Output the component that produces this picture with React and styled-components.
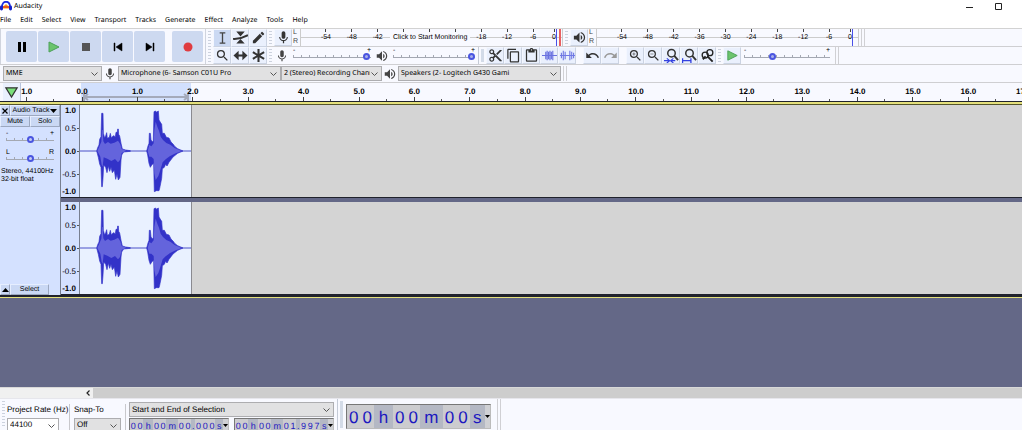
import styled, { createGlobalStyle } from 'styled-components';
import {
  MdContentCopy,
  MdContentCut,
  MdContentPaste,
  MdEdit,
  MdMic,
  MdRedo,
  MdSearch,
  MdUndo,
  MdVolumeUp,
  MdZoomIn,
  MdZoomOut,
} from 'react-icons/md';

const menus = [
  'File',
  'Edit',
  'Select',
  'View',
  'Transport',
  'Tracks',
  'Generate',
  'Effect',
  'Analyze',
  'Tools',
  'Help',
];
const seconds = Array.from({ length: 19 }, (_, i) => Math.abs(i - 1).toFixed(1));
const outline =
  'M291 213 294 203 298 195 300 178 304 170 306 100 310 100 311 160 315 174 318 168 321 158 323 175 329 172 332 160 335 174 341 167 347 170 349 157 353 157 354 147 356 147 357 163 360 168 364 190 368 207 378 210 392 212V214L372 216 366 225 364 240 361 292 356 300 352 282 348 298 344 270 338 278 334 262 330 274 326 258 322 278 318 262 312 255 310 295 308 320 306 320 304 262 300 252 296 232ZM441 213 445 198 448 190 449 160 452 160 454 180 458 185 461 183 463 95 468 93 470 97 476 93 478 120 484 130 486 132 488 160 494 160 500 172 508 174 514 186 520 192 526 200 534 206 550 213 534 220 520 231 508 247 502 258 498 252 494 262 488 266 486 295 480 325 478 332 470 332 464 335 462 250 456 255 452 262 448 250 444 225Z';
const rms =
  'M293 213 300 197 305 185 307 150 309 150 311 184 316 192 325 186 333 191 344 188 355 182 362 193 366 207 380 212 366 219 361 240 355 247 346 237 335 243 323 236 312 232 309 260 306 255 302 230ZM444 213 449 195 455 199 462 190 464 150 468 125 473 140 478 152 483 170 490 180 500 189 512 194 525 204 546 213 525 221 510 229 498 238 489 247 482 270 476 288 468 300 464 280 462 237 455 230 449 230Z';

const Icon = ({ name }) => {
  switch (name) {
    case 'pause':
      return (
        <svg viewBox='0 0 16 16'>
          <path d='M4 3h3v10H4zM9 3h3v10H9z' fill='#000' />
        </svg>
      );
    case 'play':
      return (
        <svg viewBox='0 0 16 16'>
          <path d='M3 3 13 8 3 13Z' fill='#6bc46d' stroke='#4da05a' />
        </svg>
      );
    case 'stop':
      return (
        <svg viewBox='0 0 16 16'>
          <path d='M4 4h8v8H4z' fill='#555' />
        </svg>
      );
    case 'start':
      return (
        <svg viewBox='0 0 16 16'>
          <path d='M4 4h1v8H4zM12 4v8L6 8z' fill='#000' stroke='#000' strokeWidth='.5' />
        </svg>
      );
    case 'end':
      return (
        <svg viewBox='0 0 16 16'>
          <path d='M11 4h1v8h-1zM4 4v8l6-4z' fill='#000' stroke='#000' strokeWidth='.5' />
        </svg>
      );
    case 'record':
      return (
        <svg viewBox='0 0 16 16'>
          <circle cx='8' cy='8' r='4.500' fill='#e03c40' />
        </svg>
      );
    case 'select':
      return (
        <svg viewBox='0 0 16 16'>
          <path d='M5 3h6M8 3v11M5 14h6' fill='none' stroke='#444' strokeWidth='1.400' />
        </svg>
      );
    case 'envelope':
      return (
        <svg viewBox='0 0 16 16'>
          <path d='M0 9.500Q8 10 16 5.500' fill='none' stroke='#333' strokeWidth='2' />
          <path d='M3.500 1.500h9L8 7ZM3.500 14.500h9L8 9.500Z' fill='#333' />
        </svg>
      );
    case 'timeshift':
      return (
        <svg viewBox='0 0 16 16'>
          <path d='M3 8h10' stroke='#333' strokeWidth='2.200' />
          <path d='M6 3 .5 8 6 13zM10 3l5.500 5-5.500 5z' fill='#333' />
        </svg>
      );
    case 'multi':
      return (
        <svg viewBox='0 0 16 16'>
          <path
            d='M8 1v14M2 4.500l12 7M14 4.500l-12 7'
            stroke='#333'
            strokeWidth='2.200'
          />
        </svg>
      );
    case 'trim':
      return (
        <svg viewBox='0 0 16 16'>
          <path
            d='M0 8h16M4 4v8M5.500 3v10M7 4v8M8.500 3v10M10 4v8M11.500 3v10'
            stroke='#6a72e0'
            strokeWidth='1.200'
          />
        </svg>
      );
    case 'silence':
      return (
        <svg viewBox='0 0 16 16'>
          <path
            d='M0 8h16M1.500 5v6M3.500 3v10M5.500 4v8M10.500 3v10M12.500 4v8M14.500 5v6'
            stroke='#7078e4'
            strokeWidth='1.200'
          />
        </svg>
      );
    case 'fitSelection':
    case 'fitProject':
      return (
        <svg viewBox='0 0 16 16'>
          <circle cx='8' cy='5.500' r='4' fill='none' stroke='#333' strokeWidth='1.600' />
          <path d='m11 8.500 4 4.500' stroke='#333' strokeWidth='2' />
          {name === 'fitSelection' ? (
            <path
              d='M0 13.500h5M3 11l3 2.500L3 16M12 13.500H7M10 11l-3 2.500 3 2.500'
              fill='none'
              stroke='#3340e0'
              strokeWidth='1.200'
            />
          ) : (
            <path
              d='M0 13.500h10M.6 11v5M9.500 11v5'
              fill='none'
              stroke='#3340e0'
              strokeWidth='1.400'
            />
          )}
        </svg>
      );
    case 'zoomToggle':
      return (
        <svg viewBox='0 0 16 16'>
          <path d='m8 9 5.500 5.500M3 12l3-3' stroke='#222' strokeWidth='2' />
          <circle cx='5.500' cy='7.500' r='3.200' fill='none' stroke='#222' strokeWidth='1.400' />
          <circle cx='10.500' cy='5' r='3.200' fill='none' stroke='#222' strokeWidth='1.400' />
        </svg>
      );
    case 'triangle':
      return (
        <svg viewBox='0 0 16 16'>
          <path d='M2 3h12L8 13Z' fill='#7be07b' stroke='#333' strokeWidth='1.300' />
        </svg>
      );
    default:
      return null;
  }
};

const Logo = () => (
  <svg width='12' height='10' viewBox='0 0 12 10'>
    <path d='M2 6C2-1 10-1 10 6' fill='none' stroke='#1a2be0' strokeWidth='1.800' />
    <path d='M3 5.500 5 4l1-1 1 1 2 1.500v2H3z' fill='#f59a1c' />
    <path d='M3 6h6' stroke='#e03020' strokeWidth='1.200' />
    <rect x='0' y='4.500' width='3' height='5' rx='1.400' fill='#1422cc' />
    <rect x='9' y='4.500' width='3' height='5' rx='1.400' fill='#1422cc' />
  </svg>
);

const Select = ({ label, value, ...rest }) => (
  <SelectBox {...rest}>
    <select aria-label={label}>
      <option>{value}</option>
    </select>
    <svg width='7' height='4' viewBox='0 0 7 4'>
      <path d='M.5.500 3.500 3.500 6.500.500' fill='none' stroke='#555' />
    </svg>
  </SelectBox>
);

const Slider = ({ label, value, marks = ['-', '+'], width, small }) => (
  <SliderBox $width={width} $small={small}>
    <span>{marks[0]}</span>
    <span>{marks[1]}</span>
    <input type='range' aria-label={label} defaultValue={value} />
  </SliderBox>
);

const Meter = ({ text, red }) => (
  <MeterBox>
    <Channels>
      <span>L</span>
      <span>R</span>
    </Channels>
    <Scale>
      {[54, 48, 42, 36, 30, 24, 18, 12, 6, 0].map((db) => (
        <span key={db}>{text && db > 18 && db < 42 ? '' : db ? `-${db}` : '0'}</span>
      ))}
      {text && <Hint>{text}</Hint>}
      <Peak $red={red} />
    </Scale>
  </MeterBox>
);

const TimeField = ({ value, big }) => (
  <Time $big={big}>
    {value.split('').map((char, i) => (
      <Digit key={i} $char={char}>
        {char}
      </Digit>
    ))}
    <button type='button' aria-label='Time format'>
      <svg width='5' height='3' viewBox='0 0 5 3'>
        <path d='M0 0h5L2.500 3z' />
      </svg>
    </button>
  </Time>
);

const Wave = () => (
  <Channel>
    <Levels>
      <b>1.0</b>
      <span>0.5</span>
      <b>0.0</b>
      <span>-0.5</span>
      <b>-1.0</b>
    </Levels>
    <Clip>
      <svg viewBox='241 75 333 276' preserveAspectRatio='none'>
        <path d='M241 213H574' stroke='#4a50c8' strokeWidth='3' />
        <path d={outline} fill='#3232c8' stroke='#3232c8' strokeWidth='2' />
        <path d={rms} fill='#6464dc' />
      </svg>
    </Clip>
  </Channel>
);

const App = () => {
  return (
    <Window>
      <GlobalStyle />
      <TitleBar>
        <Logo />
        <h1>Audacity</h1>
        <WindowButton type='button' aria-label='Minimize'>
          <svg width='7' height='7' viewBox='0 0 7 7'>
            <path d='M0 4.500h7' stroke='#222' />
          </svg>
        </WindowButton>
        <WindowButton type='button' aria-label='Maximize'>
          <svg width='7' height='7' viewBox='0 0 7 7'>
            <path d='M.5.500h6v6h-6z' fill='none' stroke='#222' />
          </svg>
        </WindowButton>
      </TitleBar>
      <MenuBar>
        {menus.map((menu) => (
          <button type='button' key={menu}>
            {menu}
          </button>
        ))}
      </MenuBar>

      <Toolbars>
        <Transport>
          {['pause', 'play', 'stop', 'start', 'end', 'record'].map((name) => (
            <TransportButton type='button' key={name} aria-label={name}>
              <Icon name={name} />
            </TransportButton>
          ))}
        </Transport>
        <Grip />
        <Tools>
          {['select', 'envelope'].map((name, i) => (
            <ToolButton type='button' key={name} aria-label={name} $active={i === 0}>
              <Icon name={name} />
            </ToolButton>
          ))}
          <ToolButton type='button' aria-label='draw'>
            <MdEdit />
          </ToolButton>
          <ToolButton type='button' aria-label='zoom'>
            <MdSearch />
          </ToolButton>
          {['timeshift', 'multi'].map((name) => (
            <ToolButton type='button' key={name} aria-label={name}>
              <Icon name={name} />
            </ToolButton>
          ))}
        </Tools>
        <Rows>
          <Row>
            <Grip />
            <ToolButton type='button' aria-label='Recording meter'>
              <MdMic />
            </ToolButton>
            <Meter text='Click to Start Monitoring' red />
            <Grip />
            <ToolButton type='button' aria-label='Playback meter'>
              <MdVolumeUp />
            </ToolButton>
            <Meter />
            <End />
          </Row>
          <Row>
            <Grip />
            <Glyph>
              <MdMic />
            </Glyph>
            <Slider label='Recording volume' value={98} width={84} />
            <Glyph>
              <MdVolumeUp />
            </Glyph>
            <Slider label='Playback volume' value={100} width={88} />
            <Grip $edge />
            <ToolButton type='button' aria-label='Cut'>
              <MdContentCut />
            </ToolButton>
            <ToolButton type='button' aria-label='Copy'>
              <MdContentCopy />
            </ToolButton>
            <ToolButton type='button' aria-label='Paste'>
              <MdContentPaste />
            </ToolButton>
            <ToolButton type='button' aria-label='Trim'>
              <Icon name='trim' />
            </ToolButton>
            <ToolButton type='button' aria-label='Silence'>
              <Icon name='silence' />
            </ToolButton>
            <Spacer />
            <ToolButton type='button' aria-label='Undo'>
              <MdUndo />
            </ToolButton>
            <ToolButton type='button' aria-label='Redo' $dim>
              <MdRedo />
            </ToolButton>
            <Spacer />
            <ToolButton type='button' aria-label='Zoom in'>
              <MdZoomIn />
            </ToolButton>
            <ToolButton type='button' aria-label='Zoom out'>
              <MdZoomOut />
            </ToolButton>
            {['fitSelection', 'fitProject', 'zoomToggle'].map((name) => (
              <ToolButton type='button' key={name} aria-label={name}>
                <Icon name={name} />
              </ToolButton>
            ))}
            <Grip />
            <ToolButton type='button' aria-label='Play at speed'>
              <Icon name='play' />
            </ToolButton>
            <Slider label='Playback speed' value={32} width={92} />
            <End />
          </Row>
        </Rows>
      </Toolbars>

      <DeviceBar>
        <Select label='Audio host' value='MME' $width={99} />
        <Glyph>
          <MdMic />
        </Glyph>
        <Select label='Recording device' value='Microphone (6- Samson C01U Pro' $width={163} />
        <Select label='Recording channels' value='2 (Stereo) Recording Channels' $width={101} />
        <Glyph>
          <MdVolumeUp />
        </Glyph>
        <Select label='Playback device' value='Speakers (2- Logitech G430 Gami' $width={163} />
        <End />
      </DeviceBar>

      <Ruler>
        <PinButton type='button' aria-label='Pin play head'>
          <Icon name='triangle' />
        </PinButton>
        <Timeline>
          <Region>
            <svg width='106' height='8' viewBox='0 0 106 8'>
              <path
                d='M1 4h104M1 0v8M105 0v8M5 1 1 4l4 3M101 1l4 3-4 3'
                fill='none'
                stroke='#a4aabb'
                strokeWidth='2'
              />
            </svg>
          </Region>
          <Ticks>
            {seconds.map((label, i) => (
              <span key={i}>{label}</span>
            ))}
          </Ticks>
        </Timeline>
      </Ruler>

      <Track>
        <Panel>
          <PanelRow>
            <PanelButton type='button' aria-label='Close track' $width={10}>
              <svg width='6' height='6' viewBox='0 0 6 6'>
                <path d='m.5.500 5 5m0-5-5 5' stroke='#000' strokeWidth='1.200' />
              </svg>
            </PanelButton>
            <PanelButton type='button'>
              Audio Track
              <svg width='7' height='4' viewBox='0 0 7 4'>
                <path d='M0 0h7L3.500 4z' />
              </svg>
            </PanelButton>
          </PanelRow>
          <PanelRow>
            <PanelButton type='button'>Mute</PanelButton>
            <PanelButton type='button'>Solo</PanelButton>
          </PanelRow>
          <PanelSliders>
            <Slider label='Gain' value={50} small />
            <Slider label='Pan' value={50} marks={['L', 'R']} small />
          </PanelSliders>
          <p>
            Stereo, 44100Hz
            <br />
            32-bit float
          </p>
          <PanelFooter>
            <PanelButton type='button' aria-label='Collapse' $width={10}>
              <svg width='7' height='4' viewBox='0 0 7 4'>
                <path d='M0 4h7L3.500 0z' />
              </svg>
            </PanelButton>
            <PanelButton type='button'>Select</PanelButton>
          </PanelFooter>
        </Panel>
        <ChannelList>
          <Wave />
          <Wave />
        </ChannelList>
      </Track>
      <Canvas />

      <ScrollBar>
        <button type='button' aria-label='Scroll left'>
          <svg width='4' height='6' viewBox='0 0 4 6'>
            <path d='M3.500.500 1 3l2.500 2.500' fill='none' stroke='#222' strokeWidth='1.200' />
          </svg>
        </button>
        <div />
      </ScrollBar>

      <SelectionBar>
        <Grip />
        <Field $width={63}>
          <span>Project Rate (Hz)</span>
          <Select label='Project rate' value='44100' $light $width={52} />
        </Field>
        <Field $width={56}>
          <span>Snap-To</span>
          <Select label='Snap to' value='Off' $width={47} />
        </Field>
        <SelectionRange>
          <Select label='Selection mode' value='Start and End of Selection' />
          <TimeRow>
            <TimeField value='00h00m00.000s' />
            <TimeField value='00h00m01.997s' />
          </TimeRow>
        </SelectionRange>
        <Grip $edge />
        <TimeField value='00h00m00s' big />
        <End />
      </SelectionBar>
    </Window>
  );
};

const GlobalStyle = createGlobalStyle`
  * {
    box-sizing: border-box;
  }
  body {
    margin: 0;
    overflow: hidden;
    color: #000;
    font-family: 'Liberation Sans', Arial, sans-serif;
    font-size: 7px;
    text-rendering: geometricPrecision;
  }
  button, select, input {
    margin: 0;
    padding: 0;
    border: 0;
    background: none;
    color: inherit;
    font: inherit;
    text-rendering: inherit;
  }
  svg {
    display: block;
    flex-shrink: 0;
  }
`;

const Window = styled.main`
  height: 100vh;
  display: flex;
  flex-direction: column;
  background: #f8f9ff;
`;

const TitleBar = styled.header`
  flex: 0 0 12px;
  display: flex;
  align-items: center;
  padding-right: 18px;
  background: #fff;
  font-family: 'Noto Sans', 'Open Sans', sans-serif;
  h1 {
    flex: 1;
    margin: 0 2px;
    font-size: 7px;
    font-weight: 400;
  }
`;

const WindowButton = styled.button`
  width: 9px;
  margin-left: 20px;
`;

const MenuBar = styled.nav`
  flex: 0 0 17px;
  display: flex;
  align-items: center;
  gap: 9px;
  border-bottom: 1px solid #d2d2d2;
  background: #fff;
  font-family: 'Noto Sans', 'Open Sans', sans-serif;
`;

const Toolbars = styled.div`
  flex: 0 0 36px;
  display: flex;
  border-bottom: 1px solid #cfcfd2;
`;

const Transport = styled.div`
  display: flex;
  gap: 1px;
  padding: 2px 2px 2px 5px;
  border-left: 1px solid #d0d4de;
  border-right: 1px solid #d0d4de;
`;

const TransportButton = styled.button`
  width: 31px;
  display: grid;
  place-items: center;
  border-radius: 2px;
  background: #cdd9f0;
  &:last-child {
    margin-left: 6px;
  }
  svg {
    width: 16px;
  }
`;

const Grip = styled.div`
  flex: 0 0 ${(p) => (p.$edge ? 8 : 7)}px;
  border-left: ${(p) => (p.$edge ? '1px solid #c4cad6' : '0')};
  background: ${(p) =>
      p.$edge
        ? 'linear-gradient(#d3dbe8, #d3dbe8)'
        : 'repeating-linear-gradient(#ccd2de 0 1px, transparent 1px 3px)'}
    content-box;
  padding: 2px 2px;
`;

const Tools = styled.div`
  display: grid;
  grid-template-columns: repeat(3, 18px);
`;

const ToolButton = styled.button`
  width: 18px;
  display: grid;
  place-items: center;
  border: 1px solid;
  border-color: #f4f7ff #cbd3e2 #cbd3e2 #f4f7ff;
  background: ${(p) => (p.$active ? '#cbd9f3' : '#eaf0fd')};
  color: ${(p) => (p.$dim ? '#999' : '#333')};
  svg {
    width: 15px;
    height: 15px;
  }
`;

const Rows = styled.div`
  flex: 1;
  display: grid;
  grid-template-rows: 17px 18px;
`;

const Row = styled.div`
  display: flex;
  & + & {
    border-top: 1px solid #cfcfd2;
  }
`;

const Glyph = styled.span`
  flex: 0 0 16px;
  display: grid;
  place-items: center;
  color: #444;
  svg {
    width: 14px;
    height: 14px;
  }
`;

const Spacer = styled.div`
  width: 7px;
`;

const End = styled.div`
  width: 4px;
  margin-left: 2px;
  border-left: 1px solid #d0d0d4;
  border-right: 1px solid #d0d0d4;
`;

const MeterBox = styled.div`
  display: flex;
  width: 271px;
  padding-left: 1px;
`;

const Channels = styled.div`
  width: 7px;
  display: grid;
  line-height: 8px;
  color: #444;
`;

const Scale = styled.div`
  position: relative;
  flex: 1;
  display: grid;
  grid-template-columns: repeat(9, 1fr) 16px;
  padding-left: 12px;
  border-left: 1px solid #ccc;
  border-right: 1px solid #ccc;
  background: linear-gradient(#ccc, #ccc) 0 8px / 100% 1px no-repeat;
  text-align: center;
  line-height: 17px;
  span {
    background: linear-gradient(#444, #444) 50% 0 / 1px 3px no-repeat;
  }
`;

const Hint = styled.em`
  position: absolute;
  top: 4px;
  left: 89px;
  padding: 0 3px;
  background: #f8f9ff;
  font-style: normal;
  line-height: 10px;
`;

const Peak = styled.i`
  position: absolute;
  top: 0;
  bottom: 0;
  right: 1px;
  width: 5px;
  border-left: 1px solid #4a50e8;
  border-right: ${(p) => (p.$red ? '2px solid #e86060' : '0')};
`;

const SliderBox = styled.div`
  display: grid;
  grid-template-columns: 1fr 1fr;
  grid-template-rows: 6px 9px;
  width: ${(p) => (p.$width ? `${p.$width}px` : '100%')};
  padding: 0 3px;
  line-height: 7px;
  span:nth-child(2) {
    text-align: right;
  }
  input {
    grid-column: 1 / 3;
    width: 100%;
    height: 7px;
    appearance: none;
    background:
      linear-gradient(#a4a8b2, #a4a8b2) 0 4px / 100% 1px no-repeat,
      repeating-linear-gradient(90deg, #a4a8b2 0 1px, transparent 1px 8px) 0 2px / 100% 2px
        no-repeat;
  }
  input::-webkit-slider-thumb {
    appearance: none;
    width: 7px;
    height: 7px;
    border: 2px solid #4a55e0;
    border-radius: 50%;
    background: ${(p) => (p.$small ? '#c4ccf0' : '#a8b0e8')};
  }
`;

const DeviceBar = styled.div`
  flex: 0 0 18px;
  display: flex;
  padding: 1px 0 1px 3px;
  border-bottom: 1px solid #cfcfd2;
  font-family: 'Noto Sans', 'Open Sans', sans-serif;
`;

const SelectBox = styled.div`
  position: relative;
  width: ${(p) => (p.$width ? `${p.$width}px` : '100%')};
  height: 15px;
  border: 1px solid #adadb0;
  background: ${(p) => (p.$light ? '#fff' : '#e1e1e2')};
  select {
    width: 100%;
    height: 100%;
    padding: 0 11px 0 2px;
    appearance: none;
  }
  svg {
    position: absolute;
    top: 5px;
    right: 3px;
    pointer-events: none;
  }
`;

const Ruler = styled.div`
  flex: 0 0 22px;
  display: flex;
  padding: 0 0 3px 3px;
  border-bottom: 1px solid #55552a;
  background:
    linear-gradient(#20222c 0 1px, #e4e07c 1px 3px) 0 100% / 100% 3px no-repeat,
    #f8f9ff;
`;

const PinButton = styled.button`
  width: 18px;
  display: grid;
  place-items: center;
  border-right: 1px solid #b8c4dc;
  background: #eaf0fd;
  svg {
    width: 15px;
  }
`;

const Timeline = styled.div`
  position: relative;
  flex: 1;
  overflow: hidden;
`;

const Region = styled.div`
  position: absolute;
  top: 0;
  bottom: 0;
  left: 60px;
  width: 110px;
  display: flex;
  align-items: flex-end;
  justify-content: center;
  background: #d2e0fd;
`;

const Ticks = styled.div`
  position: relative;
  display: flex;
  height: 100%;
  margin-left: -22px;
  font-size: 8px;
  font-weight: 700;
  line-height: 18px;
  text-align: center;
  span {
    flex: 0 0 5.42vw;
    background:
      linear-gradient(#444, #444) 50% 100% / 1px 4px no-repeat,
      linear-gradient(#555, #555) 100% 100% / 1px 2px no-repeat;
  }
`;

const Track = styled.section`
  flex: 0 0 191px;
  display: flex;
  border-bottom: 2px solid #20222c;
  background: #d4d4d4;
`;

const Panel = styled.div`
  width: 61px;
  display: flex;
  flex-direction: column;
  border-right: 1px solid #777f90;
  background: #d4e1ff;
  p {
    margin: 4px 0 0 1px;
    line-height: 8px;
    white-space: nowrap;
  }
`;

const PanelRow = styled.div`
  display: flex;
  height: 11px;
`;

const PanelButton = styled.button`
  flex: ${(p) => (p.$width ? `0 0 ${p.$width}px` : 1)};
  display: flex;
  align-items: center;
  justify-content: center;
  gap: 1px;
  border: 1px solid;
  border-color: #e6eeff #9ca8c0 #9ca8c0 #e6eeff;
  background: #cad8f4;
  white-space: nowrap;
`;

const PanelSliders = styled.div`
  display: grid;
  gap: 4px;
  padding: 3px 3px 0 3px;
`;

const PanelFooter = styled.div`
  display: flex;
  width: 49px;
  height: 11px;
  margin-top: auto;
`;

const ChannelList = styled.div`
  flex: 1;
  display: grid;
  grid-template-rows: 1fr 1fr;
  gap: 4px;
  background: #646887;
`;

const Channel = styled.div`
  display: flex;
  background: #d4d4d4;
  border-bottom: 1px solid #20222c;
`;

const Levels = styled.div`
  width: 19px;
  display: grid;
  grid-template-rows: 12fr 23fr 23fr 23fr 11fr;
  align-items: center;
  padding-right: 3px;
  border-right: 1px solid #777f90;
  background:
    repeating-linear-gradient(transparent 0 22px, #555 22px 23px) 100% 1px / 2px 100% no-repeat,
    #d4e1ff;
  font-size: 8px;
  line-height: 10px;
  text-align: right;
  white-space: nowrap;
`;

const Clip = styled.div`
  width: 112px;
  border-right: 1px solid #8a8a90;
  background: #e9f1ff;
  svg {
    width: 100%;
    height: 92px;
  }
`;

const Canvas = styled.div`
  flex: 1;
  border-top: 1px solid #e4e07c;
  background: #646887;
`;

const ScrollBar = styled.div`
  flex: 0 0 12px;
  display: flex;
  border-top: 1px solid #d8d8d8;
  border-bottom: 1px solid #e6e6ec;
  background: #f0f0f0;
  button {
    margin-left: 86px;
    width: 7px;
  }
  div {
    flex: 1;
    background: #cdcdcd;
  }
`;

const SelectionBar = styled.footer`
  flex: 0 0 31px;
  display: flex;
  overflow: hidden;
  font-size: 8px;
`;

const Field = styled.div`
  flex: 0 0 ${(p) => p.$width}px;
  display: flex;
  flex-direction: column;
  gap: 3px;
  margin: 5px 0 0;
  border-right: 1px solid #c8c8cc;
  line-height: 11px;
  white-space: nowrap;
  & + & {
    padding-left: 4px;
  }
`;

const SelectionRange = styled.div`
  width: 205px;
  margin: 3px 3px 0;
`;

const TimeRow = styled.div`
  display: flex;
  gap: 5px;
`;

const Time = styled.div`
  flex: ${(p) => (p.$big ? '0 0 145px' : '1 1 0')};
  min-width: 0;
  display: flex;
  height: ${(p) => (p.$big ? 25 : 14)}px;
  margin: ${(p) => (p.$big ? '5px 4px 0 1px' : '1px 0 0')};
  border: 1px solid;
  border-color: #777 #bbb #bbb #777;
  background: #b4b8c4;
  color: #1c18c0;
  font-size: ${(p) => (p.$big ? 17 : 9)}px;
  line-height: ${(p) => (p.$big ? 26 : 14)}px;
  text-align: center;
  button {
    width: 5px;
    display: grid;
    place-items: center;
    background: #cfd0d4;
    color: #000;
  }
`;

const weights = { h: 10, m: 12, '.': 4, s: 8 };

const Digit = styled.span`
  flex: ${(p) => weights[p.$char] || 7} 0 0;
  min-width: 0;
  background: ${(p) => (weights[p.$char] ? '#b4b8c4' : '#cccccf')};
`;

export default App;
